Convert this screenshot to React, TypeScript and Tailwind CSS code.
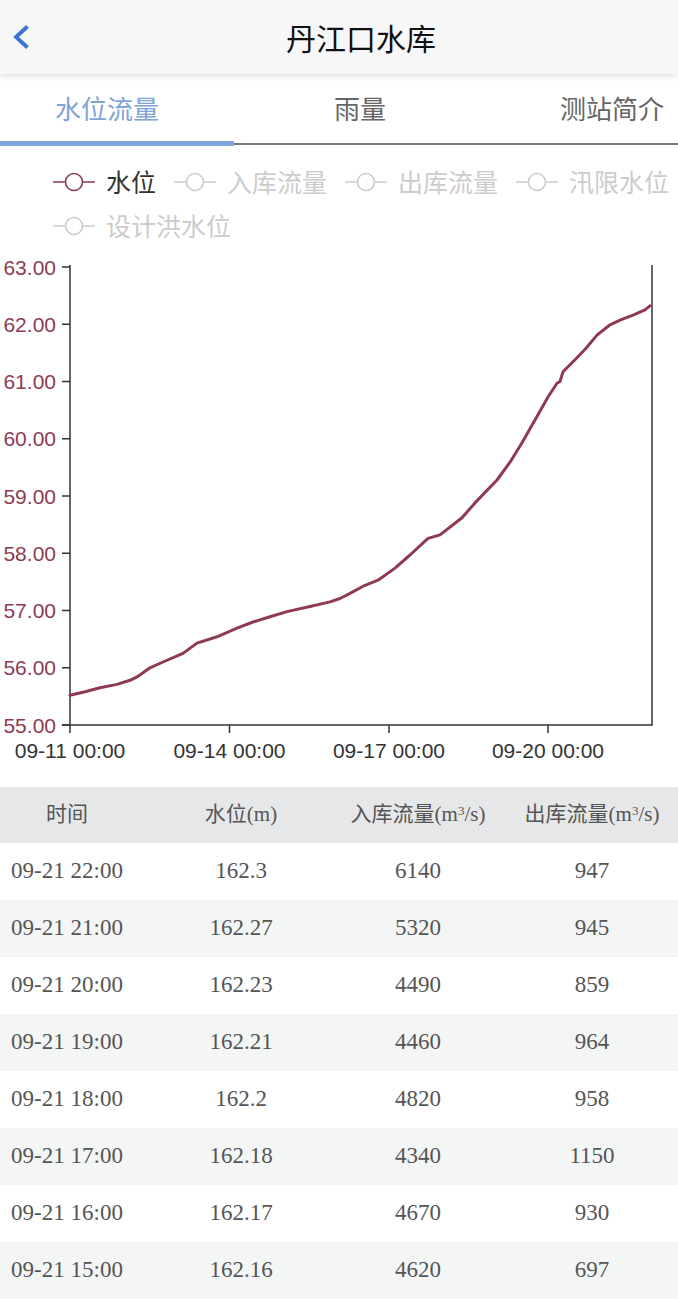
import React from "react";

const MAROON = "#8e3b50";
const CJK = '"Noto Sans CJK SC", "Noto Sans", sans-serif';

// [page x, water level] read off the curve
const points: [number, number][] = [
  [70, 55.52], [85, 55.58], [100, 55.65], [117, 55.71], [130, 55.78], [137, 55.84],
  [150, 56.0], [163, 56.1], [183, 56.25], [197, 56.43], [217, 56.54], [237, 56.69],
  [253, 56.8], [270, 56.89], [287, 56.98], [310, 57.07], [330, 57.15], [340, 57.21],
  [350, 57.3], [365, 57.44], [378, 57.53], [395, 57.74], [410, 57.97], [428, 58.26],
  [440, 58.32], [462, 58.62], [475, 58.88], [497, 59.28], [510, 59.59], [522, 59.93],
  [535, 60.33], [548, 60.73], [557, 60.97], [560, 61.0], [563, 61.17], [575, 61.38],
  [586, 61.58], [597, 61.81], [610, 61.99], [620, 62.07], [633, 62.16], [645, 62.25],
  [650, 62.32],
];

const TOP = 248;
const yOf = (v: number) => 725 - (v - 55) * 57.25 - TOP;

const legend = [
  { name: "水位", active: true },
  { name: "入库流量", active: false },
  { name: "出库流量", active: false },
  { name: "汛限水位", active: false },
  { name: "设计洪水位", active: false },
];

const rows = [
  ["09-21 22:00", "162.3", "6140", "947"],
  ["09-21 21:00", "162.27", "5320", "945"],
  ["09-21 20:00", "162.23", "4490", "859"],
  ["09-21 19:00", "162.21", "4460", "964"],
  ["09-21 18:00", "162.2", "4820", "958"],
  ["09-21 17:00", "162.18", "4340", "1150"],
  ["09-21 16:00", "162.17", "4670", "930"],
  ["09-21 15:00", "162.16", "4620", "697"],
];

function LegendIcon({ color }: { color: string }) {
  return (
    <svg width="42" height="22" viewBox="0 0 42 22">
      <line x1="0" y1="11" x2="42" y2="11" stroke={color} strokeWidth="1.6" />
      <circle cx="21" cy="11" r="8.5" fill="#fff" stroke={color} strokeWidth="1.6" />
    </svg>
  );
}

function Chart() {
  const path = points.map(([x, v], i) => `${i ? "L" : "M"}${x},${yOf(v).toFixed(1)}`).join(" ");
  const yTicks = [63, 62, 61, 60, 59, 58, 57, 56, 55];
  const xTicks: [number, string][] = [
    [70, "09-11 00:00"],
    [229.5, "09-14 00:00"],
    [389, "09-17 00:00"],
    [548, "09-20 00:00"],
  ];
  const axisY = 725 - TOP;
  return (
    <svg width="678" height="539" viewBox="0 0 678 539" className="block">
      <line x1="70" y1={265 - TOP} x2="70" y2={axisY} stroke="#333" strokeWidth="1.5" />
      <line x1="652" y1={265 - TOP} x2="652" y2={axisY} stroke="#333" strokeWidth="1.5" />
      <line x1="62" y1={axisY} x2="652.7" y2={axisY} stroke="#333" strokeWidth="1.5" />
      {yTicks.map((v) => (
        <g key={v}>
          <line x1="62" y1={yOf(v)} x2="70" y2={yOf(v)} stroke="#333" strokeWidth="1.5" />
          <text
            x="56"
            y={yOf(v)}
            textAnchor="end"
            dominantBaseline="central"
            fill={MAROON}
            fontSize="21"
            fontFamily='"Liberation Sans", Arial, sans-serif'
          >
            {v.toFixed(2)}
          </text>
        </g>
      ))}
      {xTicks.map(([x, label]) => (
        <g key={label}>
          <line x1={x} y1={axisY} x2={x} y2={axisY + 8} stroke="#333" strokeWidth="1.5" />
          <text
            x={x}
            y={750 - TOP}
            textAnchor="middle"
            dominantBaseline="central"
            fill="#333"
            fontSize="21"
            fontFamily='"Liberation Sans", Arial, sans-serif'
          >
            {label}
          </text>
        </g>
      ))}
      <path d={path} fill="none" stroke={MAROON} strokeWidth="3" strokeLinejoin="round" strokeLinecap="round" />
    </svg>
  );
}

export default function App() {
  return (
    <div className="w-[678px] min-h-[1300px] bg-white" style={{ fontFamily: CJK }}>
      <div className="relative z-10 flex h-[74px] items-center bg-[#f7f7f7] shadow-[0_3px_6px_rgba(0,0,0,0.10)]">
        <div className="w-[60px] pl-[13px]">
          <svg width="17" height="26" viewBox="0 0 17 26">
            <polyline points="14.5,2.5 3,13 14.5,23.5" fill="none" stroke="#3b72d9" strokeWidth="3.8" strokeLinejoin="miter" />
          </svg>
        </div>
        <h1 className="flex-1 pr-[16px] text-center text-[30px] text-[#111]">丹江口水库</h1>
      </div>

      <div className="flex h-[67px] items-center text-[26px]">
        <div className="w-[214px] text-center text-[#7fa3d7]">水位流量</div>
        <div className="w-[292px] text-center text-[#666]">雨量</div>
        <div className="flex-1 pl-[54px] text-[#666]">测站简介</div>
      </div>
      <div className="flex h-[5px] items-end">
        <div className="h-[5px] w-[234px] bg-[#7fa6dd]" />
        <div className="mb-[1px] h-[2px] flex-1 bg-[#777]" />
      </div>

      <div className="flex flex-wrap gap-x-[18px] pl-[53px] pt-[14px] text-[25px]">
        {legend.map((item) => (
          <div key={item.name} className="flex h-[44px] items-center gap-[11px]">
            <LegendIcon color={item.active ? MAROON : "#cccccc"} />
            <span className={item.active ? "text-[#333]" : "text-[#cccccc]"}>{item.name}</span>
          </div>
        ))}
      </div>

      <Chart />

      <div className="text-[#555]" style={{ fontFamily: '"Liberation Serif", "Noto Sans CJK SC", serif' }}>
        <div className="grid h-[56px] grid-cols-[134px_214px_140px_190px] items-center whitespace-nowrap bg-[#e6e7e9] text-[21px]">
          <div className="text-center">时间</div>
          <div className="text-center">水位(m)</div>
          <div className="text-center">
            入库流量(m<sup className="text-[13px]">3</sup>/s)
          </div>
          <div className="pl-[18px] text-center">
            出库流量(m<sup className="text-[13px]">3</sup>/s)
          </div>
        </div>
        {rows.map((r, i) => (
          <div
            key={r[0]}
            className={`grid h-[57px] grid-cols-[134px_214px_140px_190px] items-center text-[23px] ${
              i % 2 === 1 ? "bg-[#f4f5f5]" : "bg-white"
            }`}
          >
            <div className="text-center">{r[0]}</div>
            <div className="text-center">{r[1]}</div>
            <div className="text-center">{r[2]}</div>
            <div className="pl-[18px] text-center">{r[3]}</div>
          </div>
        ))}
      </div>
    </div>
  );
}
